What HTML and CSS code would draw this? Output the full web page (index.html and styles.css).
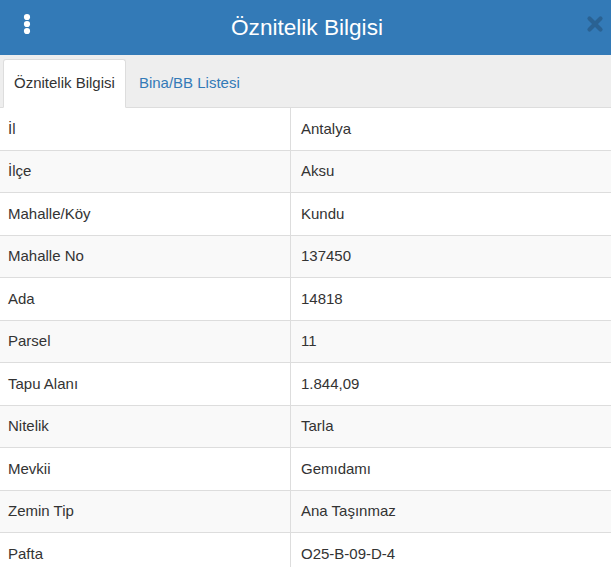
FILE: index.html
```html
<!DOCTYPE html>
<html lang="tr">
<head>
    <meta charset="UTF-8">
    <meta name="viewport" content="width=device-width, initial-scale=1.0">
    <title>Öznitelik Bilgisi</title>
    <link rel="stylesheet" href="styles.css">
</head>
<body>

<div class="panel">
    <div class="panel-header">
        <span class="menu-btn">
            <svg width="10" height="24" viewBox="0 0 10 24">
                <circle cx="5" cy="5" r="3.1" fill="#fff"/>
                <circle cx="5" cy="12" r="3.1" fill="#fff"/>
                <circle cx="5" cy="19" r="3.1" fill="#fff"/>
            </svg>
        </span>
        <h1 class="panel-title">Öznitelik Bilgisi</h1>
        <span class="close-btn">
            <svg width="18" height="18" viewBox="0 0 18 18">
                <path d="M3.5 3.5 L14.5 14.5 M14.5 3.5 L3.5 14.5" stroke="#2a6293" stroke-width="4.2" stroke-linecap="round"/>
            </svg>
        </span>
    </div>

    <ul class="nav-tabs">
        <li class="tab active">Öznitelik Bilgisi</li>
        <li class="tab">Bina/BB Listesi</li>
    </ul>

    <table class="attr-table">
        <tbody>
            <tr><td>İl</td><td>Antalya</td></tr>
            <tr><td>İlçe</td><td>Aksu</td></tr>
            <tr><td>Mahalle/Köy</td><td>Kundu</td></tr>
            <tr><td>Mahalle No</td><td>137450</td></tr>
            <tr><td>Ada</td><td>14818</td></tr>
            <tr><td>Parsel</td><td>11</td></tr>
            <tr><td>Tapu Alanı</td><td>1.844,09</td></tr>
            <tr><td>Nitelik</td><td>Tarla</td></tr>
            <tr><td>Mevkii</td><td>Gemıdamı</td></tr>
            <tr><td>Zemin Tip</td><td>Ana Taşınmaz</td></tr>
            <tr><td>Pafta</td><td>O25-B-09-D-4</td></tr>
        </tbody>
    </table>
</div>

</body>
</html>
```

FILE: styles.css
```css
body {
    margin: 0;
    font-family: "Liberation Sans", Arial, sans-serif;
    font-size: 15px;
    color: #333;
    background-color: #fff;
}

.panel {
    width: 611px;
}

.panel-header {
    height: 55px;
    background-color: #337ab7;
    display: flex;
    align-items: center;
    justify-content: center;
    position: relative;
}

.panel-title {
    margin: 0 0 0 3px;
    font-size: 22.6px;
    font-weight: normal;
    color: #fff;
    line-height: 1;
    padding-top: 1px;
}

.menu-btn {
    position: absolute;
    left: 22px;
    top: 12px;
    display: block;
    line-height: 0;
}

.close-btn {
    position: absolute;
    right: 7px;
    top: 15px;
    display: block;
    line-height: 0;
}

.nav-tabs {
    list-style: none;
    margin: 0;
    padding: 4px 0 0 3px;
    display: flex;
    background-color: #eee;
    border-bottom: 1px solid #ddd;
}

.tab {
    padding: 13px 10px 14px;
    line-height: 20px;
    margin-right: 2px;
    margin-bottom: -1px;
    border: 1px solid transparent;
    border-radius: 3px 3px 0 0;
    color: #337ab7;
}

.tab.active {
    background-color: #fff;
    color: #333;
    border-color: #ddd;
    border-bottom-color: #fff;
}

.attr-table {
    width: 100%;
    border-collapse: collapse;
}

.attr-table td {
    padding: 10.75px 8px;
    line-height: 20px;
    border-top: 1px solid #ddd;
    vertical-align: top;
}

.attr-table tr:first-child td {
    border-top: none;
}

.attr-table td:first-child {
    width: 274px;
}

.attr-table td + td {
    border-left: 1px solid #ddd;
    padding-left: 10px;
}

.attr-table tr:nth-child(even) td {
    background-color: #f9f9f9;
}
```
